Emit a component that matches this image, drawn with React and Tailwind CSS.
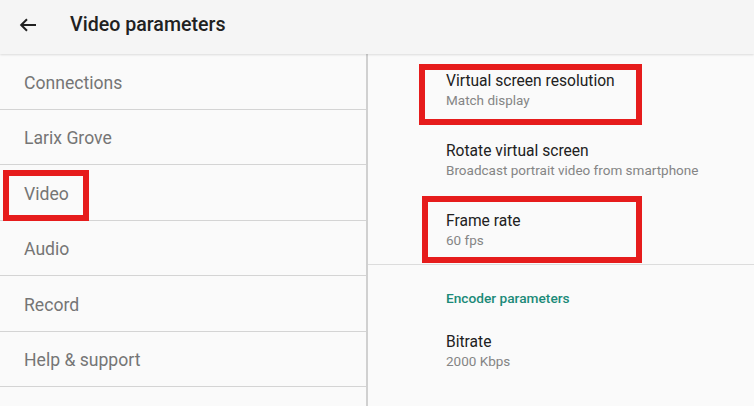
const menu = ["Connections", "Larix Grove", "Video", "Audio", "Record", "Help & support"];

const videoItems = [
  { title: "Virtual screen resolution", sub: "Match display" },
  { title: "Rotate virtual screen", sub: "Broadcast portrait video from smartphone" },
  { title: "Frame rate", sub: "60 fps" },
];

const Item = ({ title, sub }) => (
  <div className="h-[70px] flex flex-col justify-center pl-[78px] pt-[2px]">
    <div className="text-[15.6px] leading-[20px] text-[#212121]">{title}</div>
    <div className="text-[13.5px] leading-[18px] text-[#858585]">{sub}</div>
  </div>
);

export default function App() {
  return (
    <div className="relative w-[754px] h-[406px] overflow-hidden bg-[#fafafa] font-['Roboto',sans-serif]">
      {/* Toolbar */}
      <div className="relative z-10 h-[54px] flex items-center pb-[4px] bg-[#f5f5f5] shadow-[0_1px_2px_rgba(0,0,0,0.12)]">
        <svg width="18" height="14" viewBox="0 0 18 14" className="ml-[19px]" fill="none" stroke="#212121" strokeWidth="2">
          <path d="M17 7H2.5M8 1.3L2.2 7L8 12.7" />
        </svg>
        <div className="ml-[33px] text-[19.6px] font-medium text-[#212121]">Video parameters</div>
      </div>

      <div className="flex h-[352px]">
        {/* Categories */}
        <div className="w-[368px] border-r-2 border-[#d0d0d0]">
          {menu.map((m) => (
            <div key={m} className="h-[55.5px] flex items-center pl-6 pt-[3px] border-b border-[#d4d4d4] text-[17.6px] text-[#757575]">
              {m}
            </div>
          ))}
        </div>

        {/* Settings */}
        <div className="flex-1">
          {videoItems.map((it) => (
            <Item key={it.title} {...it} />
          ))}
          <div className="border-t border-[#dcdcdc]" />
          <div className="pt-[24px] pl-[78px] text-[13.7px] leading-[18px] font-medium text-[#1b8a78]">Encoder parameters</div>
          <div className="pt-[8px]">
            <Item title="Bitrate" sub="2000 Kbps" />
          </div>
        </div>
      </div>

      {/* Annotations */}
      <div className="absolute left-[419px] top-[64px] w-[223px] h-[61px] border-[6px] border-[#e61c1c]" />
      <div className="absolute left-[422px] top-[196px] w-[220px] h-[67px] border-[6px] border-[#e61c1c]" />
      <div className="absolute left-[3px] top-[170px] w-[86px] h-[51px] border-[6px] border-[#e61c1c]" />
    </div>
  );
}
